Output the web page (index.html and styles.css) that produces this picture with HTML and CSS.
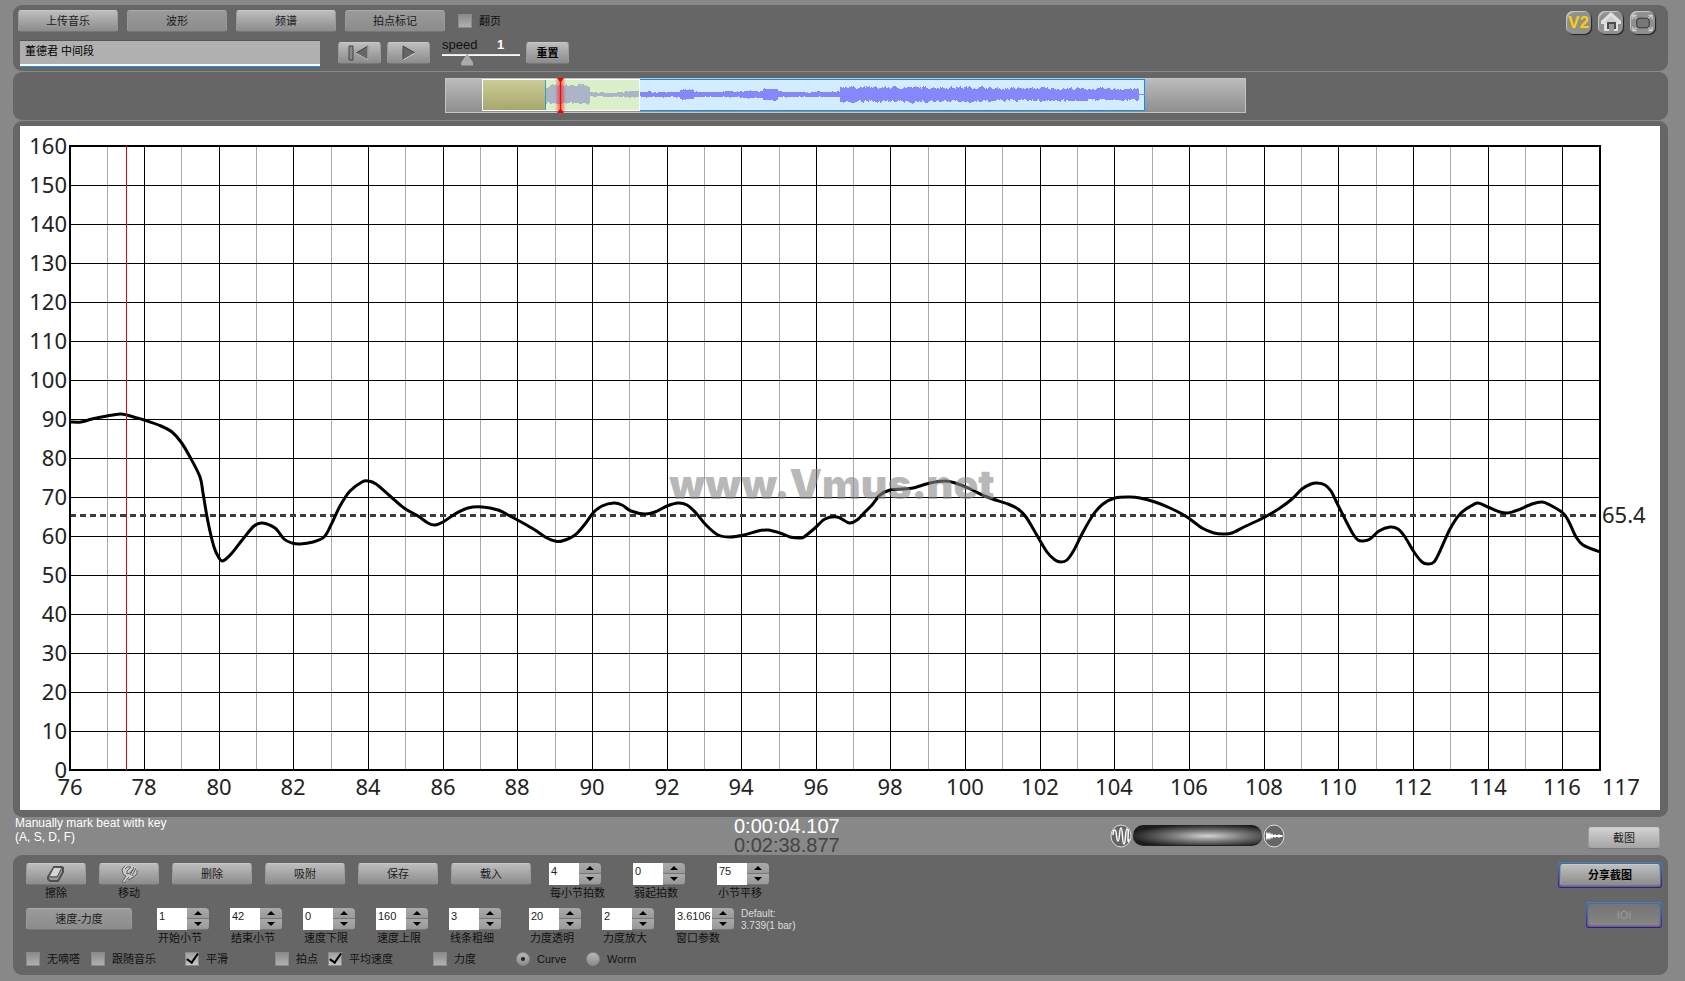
FILE: index.html
```html
<!DOCTYPE html>
<html lang="zh-CN">
<head>
  <meta charset="UTF-8" />
  <meta name="viewport" content="width=device-width, initial-scale=1.0" />
  <title>Vmus.net</title>
  <link rel="stylesheet" href="styles.css">
</head>
<body>
  <header class="panel top">
    <div class="top-left">
      <div class="tabs">
        <button type="button" class="btn w100">上传音乐</button>
        <button type="button" class="btn flat w100">波形</button>
        <button type="button" class="btn w100">频谱</button>
        <button type="button" class="btn flat w100">拍点标记</button>
        <label class="check"><input type="checkbox">翻页</label>
      </div>
      <div class="player">
        <input class="track-name" type="text" aria-label="曲目" value="董德君 中间段">
        <button type="button" class="btn w43 prev" aria-label="回到开头">
          <svg width="24" height="18" viewBox="0 0 24 18"><path d="M1 2h4v14H1z" fill="#888" stroke="#444"/><path d="M20 2v14L8 9z" fill="#666" stroke="#444"/><path d="M20 2v14L8 9" fill="none" stroke="#ccc"/></svg>
        </button>
        <button type="button" class="btn w43" aria-label="播放">
          <svg width="24" height="18" viewBox="0 0 24 18"><path d="M6 2l12 7L6 16z" fill="#666" stroke="#444"/><path d="M6 16l12-7" stroke="#ddd"/></svg>
        </button>
        <div class="speed">
          <label for="speed">speed</label><output for="speed">1</output>
          <input type="range" id="speed" min="0.1" max="3.2" step="0.1" value="1">
        </div>
        <button type="button" class="btn w43 strong">重置</button>
      </div>
    </div>
    <nav class="top-icons">
      <a href="#v2" class="icon v2">V2</a>
      <a href="#home" class="icon" aria-label="主页">
        <svg width="25" height="24" viewBox="0 0 25 24"><path d="M13 1L3 10v3h3v7h14v-7h3v-3z" fill="#e0e0e0"/><path d="M13 5l-7 6h14z" fill="#cfcfcf"/><path d="M10 18v-6h7v6" fill="none" stroke="#4c4c4c" stroke-width="2"/><path d="M11 20v-7h5v7z" fill="#999"/></svg>
      </a>
      <a href="#full" class="icon" aria-label="全屏">
        <svg width="25" height="24" viewBox="0 0 26 24"><rect x="7" y="7" width="13" height="10" rx="3" fill="#777" stroke="#333"/><path d="M3 8V4h4M3 4l4 3M19 4h4v4M23 4l-4 3M3 16v4h4M3 20l4-3M23 16v4h-4M23 20l-4-3" fill="none" stroke="#e0e0e0"/></svg>
      </a>
    </nav>
  </header>

  <section class="panel overview">
    <svg width="801" height="35" viewBox="445 78 801 35">
      <defs>
        <linearGradient id="gray" x2="0" y2="1"><stop offset="0" stop-color="#bcbcbc"/><stop offset="1" stop-color="#8e8e8e"/></linearGradient>
        <linearGradient id="olive" x2="0" y2="1"><stop offset="0" stop-color="#cccc96"/><stop offset="1" stop-color="#a5a56c"/></linearGradient>
        <linearGradient id="glow"><stop offset="0" stop-color="#f00" stop-opacity="0"/><stop offset=".5" stop-color="#f00" stop-opacity=".6"/><stop offset="1" stop-color="#f00" stop-opacity="0"/></linearGradient>
      </defs>
      <rect x="445.5" y="78.5" width="800" height="34" fill="url(#gray)" stroke="#c4c4c4"/>
      <rect x="545.5" y="79.5" width="599" height="31" fill="#d3ecff" stroke="#0a8ff5"/>
      <path id="wave" fill="#8488fb"/>
      <rect x="546" y="80" width="94" height="31" fill="#e5f280" fill-opacity=".42"/>
      <rect x="483" y="80" width="62" height="31" fill="url(#olive)"/>
      <path d="M545.5 80v31" stroke="#20a8c0"/>
      <rect x="482.5" y="79.5" width="157" height="31" fill="none" stroke="#fff"/>
      <rect x="555" y="79" width="11" height="33" fill="url(#glow)"/>
      <path d="M560.5 80v31" stroke="#f00"/>
      <path d="M557 78h7l-3 4h-1zM557 113h7l-3-4h-1z" fill="#f00"/>
    </svg>
  </section>

  <main class="panel chart-panel">
    <svg class="chart" viewBox="20 126 1640 684">
      <g id="grid"></g>
      <path d="M70 515.5h1529" stroke="#3c3c3c" stroke-width="3" stroke-dasharray="6 4"/>
      <path id="curve" fill="none" stroke="#000" stroke-width="3"/>
      <rect x="70" y="146" width="1530" height="624" fill="none" stroke="#000" stroke-width="2"/>
      <path d="M126.5 146v624" stroke="#e00"/>
      <text class="mark" x="832" y="499">www.Vmus.net</text>
      <g id="labels"></g>
      <text x="1602" y="523">65.4</text>
    </svg>
  </main>

  <section class="status">
    <p class="hint">Manually mark beat with key<br>(A, S, D, F)</p>
    <div class="time"><div>0:00:04.107</div><div class="total">0:02:38.877</div></div>
    <div class="zoom">
      <svg width="22" height="24" viewBox="0 0 22 24"><ellipse cx="11" cy="12" rx="10" ry="11" fill="#666" stroke="#ddd"/><path d="M3 11c0-3 1-5 2-5 2 0 1 11 3 11S9 4 11 4s1 16 3 16 1-15 3-15 1 5 1 10 1 1 1 0" fill="none" stroke="#fff" stroke-width="1.5"/></svg>
      <div class="knob"></div>
      <svg width="22" height="24" viewBox="0 0 22 24"><ellipse cx="11" cy="12" rx="10" ry="11" fill="#666" stroke="#ddd"/><path d="M3 7l1 3 1-2 1 2 1-2 1 3 1-2 1 2h1l1-1 1 1h2l1-1 1 1h2l1 1-1 1h-2l-1 1-1-1h-2l-1 1-1-1h-1l-1 2-1-2-1 3-1-2-1 2-1-2-1 3z" fill="#fff"/></svg>
    </div>
    <button type="button" class="btn light shot">截图</button>
  </section>

  <footer class="panel tools">
    <div class="tool-rows">
      <div class="row">
        <div class="stack">
          <button type="button" class="btn w60" aria-labelledby="cap-erase">
            <svg width="20" height="18" viewBox="0 0 20 18"><path d="M8 2h8l1 1v4l-5 9H4l-2-2v-2z" fill="#999" stroke="#505050" stroke-width="2"/><path d="M8 3h7l-4 8H4z" fill="#d4d4d4"/><path d="M3 12h8l5-9" fill="none" stroke="#505050"/></svg>
          </button>
          <span id="cap-erase">擦除</span>
        </div>
        <div class="stack">
          <button type="button" class="btn w60" aria-labelledby="cap-move">
            <svg width="20" height="18" viewBox="0 0 20 18"><path d="M6 1h8l4 2v6l-5 4-4 2-4 3-2-1 4-6-3-2-1-4z" fill="#c8c8c8"/><path d="M6 1L3 4l1 5 3 2-4 6 2 1 5-6M6 4l2-2h4L8 6v3l3-1 3-4M14 2l1 1-4 7M17 3l-4 8M18 5v4l-5 4-4 2" fill="none" stroke="#606060"/></svg>
          </button>
          <span id="cap-move">移动</span>
        </div>
        <button type="button" class="btn w80">删除</button>
        <button type="button" class="btn w80">吸附</button>
        <button type="button" class="btn w80">保存</button>
        <button type="button" class="btn w80">载入</button>
        <div class="steppers wide">
          <div class="stepper"><input id="beats" type="text" value="4"><div class="arrows"><button type="button" aria-label="加"></button><button type="button" aria-label="减"></button></div><label for="beats">每小节拍数</label></div>
          <div class="stepper"><input id="pickup" type="text" value="0"><div class="arrows"><button type="button" aria-label="加"></button><button type="button" aria-label="减"></button></div><label for="pickup">弱起拍数</label></div>
          <div class="stepper"><input id="shift" type="text" value="75"><div class="arrows"><button type="button" aria-label="加"></button><button type="button" aria-label="减"></button></div><label for="shift">小节平移</label></div>
        </div>
      </div>
      <div class="row">
        <button type="button" class="btn flat w106">速度-力度</button>
        <div class="steppers">
          <div class="stepper"><input id="from" type="text" value="1"><div class="arrows"><button type="button" aria-label="加"></button><button type="button" aria-label="减"></button></div><label for="from">开始小节</label></div>
          <div class="stepper"><input id="to" type="text" value="42"><div class="arrows"><button type="button" aria-label="加"></button><button type="button" aria-label="减"></button></div><label for="to">结束小节</label></div>
          <div class="stepper"><input id="low" type="text" value="0"><div class="arrows"><button type="button" aria-label="加"></button><button type="button" aria-label="减"></button></div><label for="low">速度下限</label></div>
          <div class="stepper"><input id="high" type="text" value="160"><div class="arrows"><button type="button" aria-label="加"></button><button type="button" aria-label="减"></button></div><label for="high">速度上限</label></div>
          <div class="stepper"><input id="thick" type="text" value="3"><div class="arrows"><button type="button" aria-label="加"></button><button type="button" aria-label="减"></button></div><label for="thick">线条粗细</label></div>
        </div>
        <div class="steppers second">
          <div class="stepper"><input id="alpha" type="text" value="20"><div class="arrows"><button type="button" aria-label="加"></button><button type="button" aria-label="减"></button></div><label for="alpha">力度透明</label></div>
          <div class="stepper"><input id="gain" type="text" value="2"><div class="arrows"><button type="button" aria-label="加"></button><button type="button" aria-label="减"></button></div><label for="gain">力度放大</label></div>
          <div class="stepper long"><input id="win" type="text" value="3.6106"><div class="arrows"><button type="button" aria-label="加"></button><button type="button" aria-label="减"></button></div><label for="win">窗口参数</label></div>
        </div>
        <p class="default">Default:<br>3.739(1 bar)</p>
      </div>
      <div class="options">
        <label class="check"><input type="checkbox">无嘀嗒</label>
        <label class="check"><input type="checkbox">跟随音乐</label>
        <label class="check"><input type="checkbox" checked>平滑</label>
        <label class="check"><input type="checkbox">拍点</label>
        <label class="check"><input type="checkbox" checked>平均速度</label>
        <label class="check"><input type="checkbox">力度</label>
        <label class="check"><input type="radio" name="mode" checked>Curve</label>
        <label class="check"><input type="radio" name="mode">Worm</label>
      </div>
    </div>
    <div class="share">
      <div class="ring"><button type="button" class="btn w100 strong">分享截图</button></div>
      <div class="ring"><button type="button" class="btn w72" disabled>IOI</button></div>
    </div>
  </footer>

  <script src="script.js"></script>
</body>
</html>
```
FILE: styles.css
```css
* {
  box-sizing: border-box;
}

body {
  margin: 0;
  padding: 5px 17px 7px 13px;
  background: #888;
  font-family: "Liberation Sans", "Noto Sans CJK SC", sans-serif;
  font-size: 11px;
  line-height: 14px;
  color: #111;
}

p {
  margin: 0;
}

svg {
  display: block;
}

.panel {
  background: #666;
  border-radius: 9px;
  margin-bottom: 1px;
}

/* buttons */
.btn {
  display: flex;
  align-items: center;
  justify-content: center;
  height: 22px;
  padding: 0;
  border: 1px solid #999;
  border-top-color: #c8c8c8;
  border-bottom-color: #777;
  border-radius: 3px;
  background: linear-gradient(#bdbdbd, #8c8c8c);
  color: #1a1a1a;
  font: inherit;
}

.btn.flat {
  background: linear-gradient(#9a9a9a, #8c8c8c);
  border-top-color: #aaa;
}

.btn.light {
  background: linear-gradient(#d2d2d2, #a4a4a4);
}

.btn.strong {
  font-weight: bold;
  color: #000;
}

.btn:disabled {
  background: linear-gradient(#747474, #868686);
  border-color: #777;
  color: #999;
}

.w43 { width: 43px; }
.w60 { width: 60px; }
.w72 { width: 72px; }
.w80 { width: 80px; }
.w100 { width: 100px; }
.w106 { width: 106px; }

/* top bar */
.top {
  display: flex;
  justify-content: space-between;
  height: 66px;
  padding: 5px 13px 0 5px;
}

.tabs {
  display: flex;
  align-items: center;
  gap: 9px;
  margin-bottom: 8px;
}

.tabs .check {
  margin-left: 4px;
}

.player {
  display: flex;
  gap: 6px;
  padding-left: 2px;
}

.player .btn {
  margin-top: 2px;
}

.player .prev {
  margin-left: 12px;
}

.track-name {
  width: 300px;
  height: 27px;
  padding: 0 5px 7px;
  border: 0;
  border-top: 1px solid #555;
  border-bottom: 1px solid #0a94ff;
  background: linear-gradient(#b0b0b0 23px, #fff 23px);
  font: inherit;
  color: #000;
}

.speed {
  display: grid;
  grid-template-columns: 55px 23px;
  width: 78px;
  margin: -2px 0 0 6px;
  font-size: 13px;
}

.speed output {
  color: #fff;
  font-weight: bold;
}

.speed input {
  grid-column: 1 / 3;
  appearance: none;
  width: 78px;
  height: 14px;
  margin: 0;
  background: linear-gradient(#ddd, #fff) 0 1px / 100% 2px no-repeat;
}

.speed input::-webkit-slider-thumb {
  appearance: none;
  width: 12px;
  height: 12px;
  background: #aaa;
  clip-path: polygon(50% 0, 100% 75%, 100% 100%, 0 100%, 0 75%);
}

.top-icons {
  display: flex;
  gap: 7px;
  padding-top: 1px;
}

.icon {
  width: 25px;
  height: 23px;
  border-radius: 7px;
  background: #909090;
  box-shadow: inset 2px 2px 1px -1px #c8c8c8, 1px 1px 1px #222;
}

.v2 {
  color: #fc0;
  font-size: 17px;
  font-weight: bold;
  line-height: 24px;
  text-align: center;
  text-decoration: none;
}

/* check boxes and radios */
.check {
  display: flex;
  align-items: center;
  gap: 7px;
  white-space: nowrap;
}

.check input {
  appearance: none;
  display: grid;
  place-items: center;
  width: 14px;
  height: 14px;
  margin: 0;
  border: 1px solid #8a8a8a;
  background: linear-gradient(#8c8c8c, #b0b0b0);
}

.check input[type="radio"] {
  border-radius: 50%;
  background: linear-gradient(#b8b8b8, #8c8c8c);
}

.check input[type="checkbox"]:checked {
  background: linear-gradient(#a0a0a0, #c4c4c4);
}

.check input[type="checkbox"]:checked::before {
  content: "";
  width: 5px;
  height: 10px;
  margin-top: -4px;
  border: solid #000;
  border-width: 0 2px 2px 0;
  transform: rotate(35deg);
}

.check input[type="radio"]:checked::before {
  content: "";
  width: 4px;
  height: 4px;
  border-radius: 50%;
  background: #222;
}

/* overview strip */
.overview {
  display: flex;
  justify-content: center;
  padding: 6px 0 7px 10px;
}

/* chart */
.chart-panel {
  padding: 5px 8px 7px 7px;
  margin: 0;
}

.chart {
  width: 100%;
  background: #fff;
}

.chart text {
  font-family: "Noto Sans", sans-serif;
  font-size: 22px;
  fill: #222;
}

.chart .middle {
  text-anchor: middle;
}

.chart .end {
  text-anchor: end;
}

.chart .mark {
  font-family: Inter, sans-serif;
  font-size: 41px;
  font-weight: 900;
  fill: #888;
  fill-opacity: 0.6;
  text-anchor: middle;
}

/* status line */
.status {
  display: grid;
  grid-template-columns: 721px 373px 1fr auto;
  height: 38px;
  padding-right: 8px;
}

.hint {
  padding: 0 2px;
  margin-top: -1px;
  font-size: 12px;
  color: #fff;
}

.time {
  font-size: 20px;
  line-height: 19px;
  color: #fff;
}

.total {
  color: #444;
}

.zoom {
  display: flex;
  gap: 1px;
  padding: 7px 0 0 3px;
}

.knob {
  width: 129px;
  height: 21px;
  margin-top: 1px;
  border-radius: 10px;
  background: radial-gradient(ellipse at 58% 55%, #d4d4d4, #777 35%, #1c1c1c 75%);
  border-bottom: 1px solid #222;
}

.shot {
  width: 72px;
  margin-top: 10px;
}

/* bottom tools */
.tools {
  display: flex;
  justify-content: space-between;
  min-height: 119px;
  padding: 8px 6px 9px 13px;
  margin: 0;
}

.row {
  display: flex;
  gap: 13px;
  height: 45px;
}

.stack {
  display: flex;
  flex-direction: column;
  align-items: center;
  gap: 1px;
}

.steppers {
  display: flex;
  gap: 21px;
  margin-left: 12px;
}

.steppers.wide {
  gap: 32px;
  margin-left: 5px;
}

.steppers.second {
  margin-left: 15px;
}

.stepper {
  display: grid;
  grid-template-columns: 30px 22px;
  grid-template-rows: 22px 14px;
  row-gap: 1px;
}

.stepper.long {
  grid-template-columns: 37px 22px;
}

.stepper input {
  width: 100%;
  height: 22px;
  padding: 0 2px 6px;
  border: 0;
  background: #fff;
  font: 11px/14px "Liberation Sans", sans-serif;
  color: #222;
}

.stepper label {
  grid-column: 1 / 3;
  width: 0;
  padding-left: 1px;
  white-space: nowrap;
}

.arrows {
  display: grid;
  overflow: hidden;
  border-radius: 0 4px 4px 0;
}

.arrows button {
  display: grid;
  place-items: center;
  padding: 0;
  border: 0;
  border-bottom: 1px solid #777;
  background: linear-gradient(#aaa, #999);
}

.arrows button::before {
  content: "";
  border: solid transparent;
  border-width: 0 4px 4px;
  border-bottom-color: #000;
}

.arrows button:last-child::before {
  border-width: 4px 4px 0;
  border-top-color: #000;
}

.default {
  margin-left: -6px;
  font-size: 10px;
  line-height: 12px;
  color: #ddd;
}

.options {
  display: grid;
  grid-template-columns: 65px 94px 90px 53px 105px 83px 70px 70px;
  margin-top: -1px;
}

.share {
  display: flex;
  flex-direction: column;
  align-items: flex-end;
  gap: 14px;
  margin-top: -1px;
}

.ring {
  padding: 1px;
  border: 1px solid transparent;
  border-radius: 3px;
  background: linear-gradient(#666, #666) padding-box, linear-gradient(#2a86f0, #3a10b8) border-box;
}
```
FILE: script.js
```js
const NS = "http://www.w3.org/2000/svg";
const LEFT = 70, TOP = 146, WIDTH = 1530, HEIGHT = 624;
const grid = document.getElementById("grid");
const labels = document.getElementById("labels");

function line(x1, y1, x2, y2, color) {
  const el = document.createElementNS(NS, "path");
  el.setAttribute("d", `M${x1} ${y1}L${x2} ${y2}`);
  el.setAttribute("stroke", color);
  grid.appendChild(el);
}

function label(x, y, text, cls) {
  const el = document.createElementNS(NS, "text");
  el.setAttribute("x", x);
  el.setAttribute("y", y);
  el.setAttribute("class", cls);
  el.textContent = text;
  labels.appendChild(el);
}

// bars 76 - 117
for (let bar = 76; bar <= 117; bar++) {
  const x = Math.floor(LEFT + (bar - 76) * WIDTH / 41);
  if (bar < 117) {
    line(x + 0.5, TOP, x + 0.5, TOP + HEIGHT, bar % 2 ? "#aaa" : "#000");
  }
  if (bar % 2 === 0) label(x, 795, bar, "middle");
}
label(1602, 795, 117, "");

// tempo 0 - 160
for (let t = 0; t <= 160; t += 10) {
  const y = Math.floor(TOP + HEIGHT - t * 3.9);
  line(LEFT, y + 0.5, LEFT + WIDTH, y + 0.5, "#000");
  label(67, y + 8, t, "end");
}

const points = [
  [70,422],[81,422],[92,419],[107,416],[120,414],[127,415],[137,418],[144,420],[161,426],[172,432],
  [181,442],[190,457],[200,477],[203,493],[208,522],[214,547],[219,558],[222,561],[226,559],[232,553],
  [243,539],[254,526],[262,523],[275,528],[284,539],[292,543],[300,544],[313,542],[324,537],[331,525],
  [340,506],[350,491],[362,482],[368,481],[376,484],[390,496],[404,508],[418,516],[428,523],[435,525],
  [443,522],[455,514],[468,508],[482,507],[498,510],[510,516],[523,523],[535,530],[547,538],[555,541],
  [562,541],[575,535],[585,524],[593,513],[602,506],[614,503],[622,505],[631,511],[645,514],[655,512],
  [667,506],[678,503],[687,505],[696,513],[706,525],[718,535],[730,537],[744,535],[758,531],[768,530],
  [780,533],[790,537],[800,538],[804,537],[815,528],[825,519],[837,517],[845,521],[850,523],[857,520],
  [865,512],[872,505],[880,495],[890,490],[903,489],[913,488],[930,483],[945,481],[955,483],[968,488],
  [987,497],[1008,504],[1018,509],[1026,517],[1035,532],[1047,552],[1055,560],[1061,562],[1067,560],
  [1074,550],[1082,534],[1093,515],[1103,504],[1115,498],[1130,497],[1140,498],[1155,502],[1170,508],
  [1187,517],[1202,528],[1214,533],[1223,534],[1232,533],[1246,526],[1265,517],[1280,508],[1292,499],
  [1302,489],[1311,484],[1317,483],[1325,485],[1331,491],[1337,503],[1346,521],[1353,534],[1358,540],
  [1363,541],[1370,539],[1379,531],[1390,527],[1398,529],[1405,537],[1414,552],[1422,562],[1428,564],
  [1434,562],[1440,551],[1450,529],[1460,514],[1471,506],[1478,503],[1488,507],[1500,512],[1508,513],
  [1518,510],[1532,504],[1542,502],[1550,505],[1563,513],[1569,522],[1576,537],[1583,545],[1592,549],[1600,552]
];

// smooth path through the points
let d = `M${points[0]}`;
for (let i = 0; i < points.length - 1; i++) {
  const a = points[i - 1] || points[i], b = points[i], c = points[i + 1], e = points[i + 2] || c;
  d += `C${b[0] + (c[0] - a[0]) / 6} ${b[1] + (c[1] - a[1]) / 6} ` +
       `${c[0] - (e[0] - b[0]) / 6} ${c[1] - (e[1] - b[1]) / 6} ${c}`;
}
document.getElementById("curve").setAttribute("d", d);

// waveform: [end x, loudness, variation]
const parts = [
  [550, 6, 5], [590, 7, 5], [625, 2, 1], [640, 3, 1], [680, 2, 2], [694, 4, 2], [740, 2, 2],
  [763, 3, 2], [778, 5, 2], [840, 2, 2], [856, 6, 4], [930, 5, 5], [990, 5, 5], [1080, 4, 5], [1139, 4, 4], [1145, 1, 0]
];
let seed = 7;
function rand() {
  seed = (seed * 16807) % 2147483647;
  return seed / 2147483647;
}
let wave = "";
let r1 = 0.5, r2 = 0.5;
for (let x = 546; x < 1145; x++) {
  const part = parts.find(p => x < p[0]);
  r1 = (r1 + rand()) / 2;
  r2 = (r2 + rand()) / 2;
  const up = Math.round(part[1] + r1 * part[2]) - 1;
  const down = Math.round(part[1] + r2 * part[2]) - 1;
  wave += `M${x} ${94 - up}h1v${up + down + 1}h-1z`;
}
document.getElementById("wave").setAttribute("d", wave);
```
